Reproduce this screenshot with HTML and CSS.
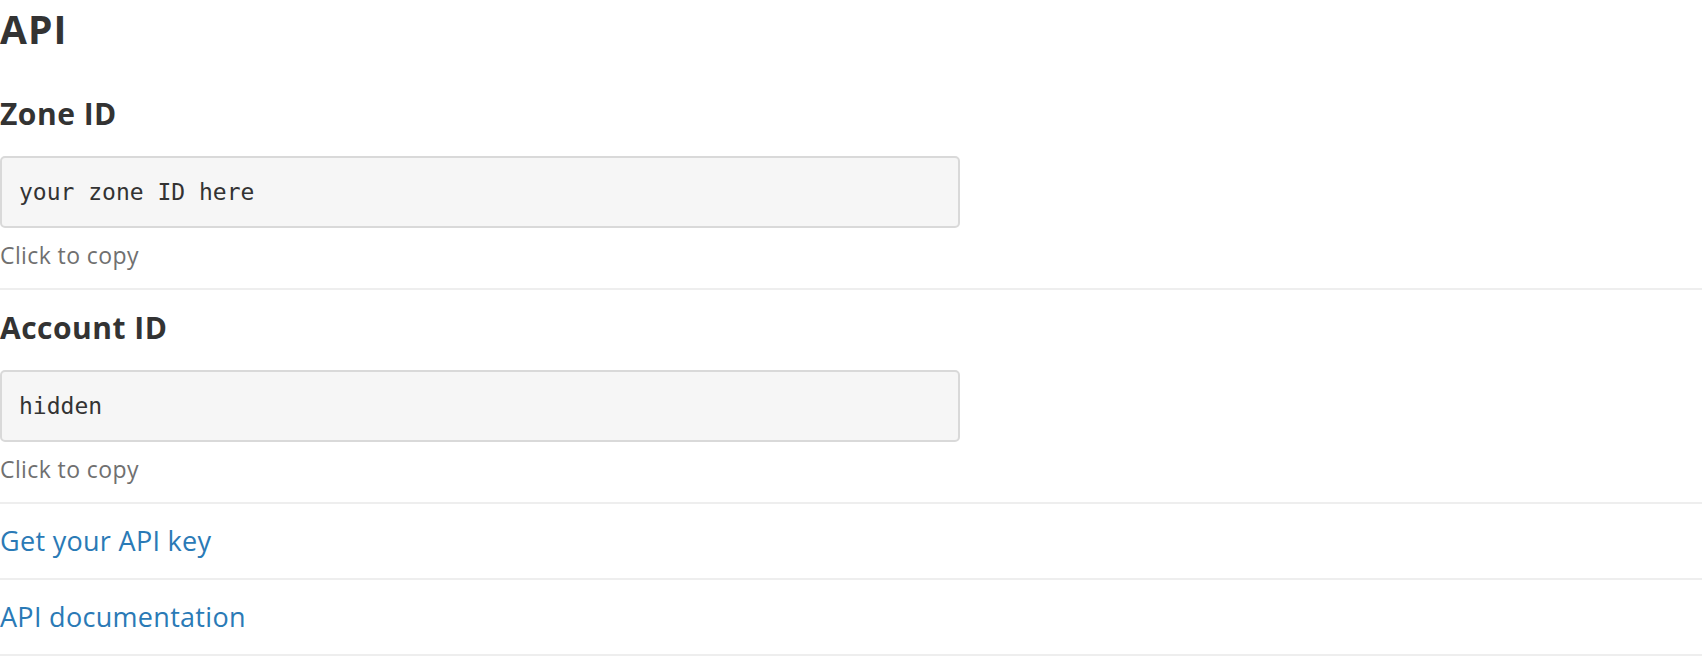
FILE: index.html
```html
<!DOCTYPE html>
<html lang="en">
<head>
<meta charset="utf-8">
<title>API</title>
<link rel="stylesheet" href="styles.css">
</head>
<body>
<div class="page">
  <h1 class="title">API</h1>
  <section class="field">
    <h2 class="field-label">Zone ID</h2>
    <div class="code-box">your zone ID here</div>
    <p class="hint">Click to copy</p>
  </section>
  <section class="field">
    <h2 class="field-label">Account ID</h2>
    <div class="code-box">hidden</div>
    <p class="hint">Click to copy</p>
  </section>
  <div class="link-row"><a class="link" href="#">Get your API key</a></div>
  <div class="link-row"><a class="link" href="#">API documentation</a></div>
</div>
</body>
</html>
```
FILE: styles.css
```css
html, body {
  margin: 0;
  padding: 0;
  background: #ffffff;
}

.page {
  display: flex;
  flex-direction: column;
  padding-top: 7px;
  font-family: "Open Sans", "Noto Sans", sans-serif;
  color: #333333;
}

.title {
  margin: 0 0 25px 0;
  font-size: 39px;
  line-height: 44px;
  font-weight: 700;
  letter-spacing: 1px;
  color: #333333;
}

.field {
  display: flex;
  flex-direction: column;
  padding: 20px 0 21px 0;
  border-bottom: 2px solid #eeeeee;
}

.field-label {
  margin: 0;
  font-size: 30px;
  line-height: 36px;
  font-weight: 700;
  letter-spacing: 0.5px;
  color: #333333;
}

.code-box {
  box-sizing: border-box;
  width: 960px;
  height: 72px;
  margin-top: 24px;
  padding: 0 17px;
  display: flex;
  align-items: center;
  background: #f6f6f6;
  border: 2px solid #d9d9d9;
  border-radius: 5px;
  font-family: "DejaVu Sans Mono", monospace;
  font-size: 23px;
  color: #333333;
}

.hint {
  margin: 15px 0 0 0;
  font-size: 23px;
  line-height: 24px;
  letter-spacing: 0.4px;
  color: #707070;
}

.link-row {
  height: 74px;
  display: flex;
  align-items: center;
  border-bottom: 2px solid #eeeeee;
}

.link {
  font-size: 27px;
  line-height: 74px;
  letter-spacing: 0.3px;
  color: #2a7ab6;
  text-decoration: none;
}
```
